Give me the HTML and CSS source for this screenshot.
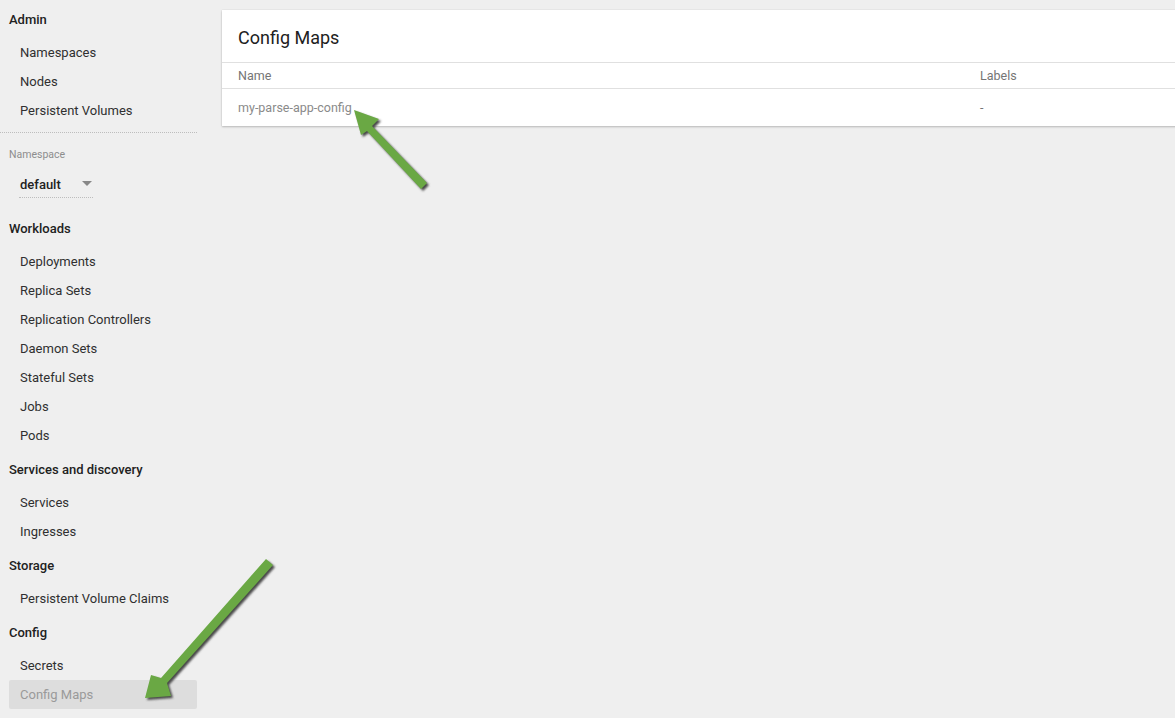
FILE: index.html
```html
<!DOCTYPE html>
<html>
<head>
<meta charset="utf-8">
<link rel="stylesheet" href="styles.css">
</head>
<body>
<div class="page">
  <nav class="sidebar">
    <div class="group-title">Admin</div>
    <div class="item">Namespaces</div>
    <div class="item">Nodes</div>
    <div class="item">Persistent Volumes</div>
    <div class="ns-block">
      <div class="ns-label">Namespace</div>
      <div class="ns-select"><span>default</span><span class="caret"></span></div>
    </div>
    <div class="group-title">Workloads</div>
    <div class="item">Deployments</div>
    <div class="item">Replica Sets</div>
    <div class="item">Replication Controllers</div>
    <div class="item">Daemon Sets</div>
    <div class="item">Stateful Sets</div>
    <div class="item">Jobs</div>
    <div class="item">Pods</div>
    <div class="group-title">Services and discovery</div>
    <div class="item">Services</div>
    <div class="item">Ingresses</div>
    <div class="group-title">Storage</div>
    <div class="item">Persistent Volume Claims</div>
    <div class="group-title">Config</div>
    <div class="item">Secrets</div>
    <div class="item active">Config Maps</div>
  </nav>
  <main class="main">
    <section class="card">
      <h1 class="card-title">Config Maps</h1>
      <div class="row head">
        <div class="col-name">Name</div>
        <div class="col-labels">Labels</div>
      </div>
      <div class="row data">
        <div class="col-name">my-parse-app-config</div>
        <div class="col-labels">-</div>
      </div>
    </section>
  </main>
</div>
<svg class="arrows" width="1175" height="718" viewBox="0 0 1175 718">
  <defs>
    <filter id="sh" x="-20%" y="-20%" width="140%" height="140%">
      <feGaussianBlur stdDeviation="0.8"/>
    </filter>
  </defs>
  <g transform="translate(2,2)" fill="#4a4a4a" filter="url(#sh)">
    <polygon points="421,189 427,183 372,126 379,119 354,110 361,135 367,131"/>
    <polygon points="266,559 273,565 167,683 171,696 145,698 151,675 161,678"/>
  </g>
  <g fill="#6aa844">
    <polygon points="421,189 427,183 372,126 379,119 354,110 361,135 367,131"/>
    <polygon points="266,559 273,565 167,683 171,696 145,698 151,675 161,678"/>
  </g>
</svg>
</body>
</html>
```
FILE: styles.css
```css
html, body {
  margin: 0;
  padding: 0;
  background: #efefef;
  overflow: hidden;
}
body {
  width: 1175px;
  height: 718px;
  position: relative;
  font-family: Roboto, "Liberation Sans", sans-serif;
  color: #212121;
}
.page {
  display: flex;
  align-items: flex-start;
}
.sidebar {
  width: 197px;
  flex: none;
  display: flex;
  flex-direction: column;
}
.group-title {
  font-size: 13px;
  font-weight: 500;
  line-height: 20px;
  padding: 10px 0 8px 9px;
  color: #212121;
}
.item {
  font-size: 13px;
  line-height: 29px;
  height: 29px;
  padding-left: 11px;
  margin-left: 9px;
  color: #303030;
  border-radius: 2px;
}
.item.active {
  background: #dddddd;
  color: #9a9a9a;
}
.ns-block {
  margin-top: 7px;
  border-top: 1px dotted #bdbdbd;
  padding-bottom: 11px;
}
.ns-label {
  font-size: 10.5px;
  color: #8d8d8d;
  line-height: 16px;
  padding: 14px 0 0 9px;
}
.ns-select {
  margin: 12px 0 0 19px;
  width: 74px;
  padding-bottom: 2px;
  border-bottom: 1px dotted #bdbdbd;
  display: flex;
  justify-content: space-between;
  align-items: center;
  font-size: 13px;
  font-weight: 500;
  line-height: 20px;
  color: #222;
  box-sizing: border-box;
  padding-left: 1px;
}
.caret {
  width: 0;
  height: 0;
  border-left: 5px solid transparent;
  border-right: 5px solid transparent;
  border-top: 5px solid #888;
  margin-right: 1px;
  margin-bottom: 3px;
}
.main {
  flex: 1;
  padding: 10px 0 0 25px;
  min-width: 0;
}
.card {
  width: 1000px;
  background: #ffffff;
  box-shadow: 0 1px 2px rgba(0,0,0,0.22), 0 0 1px rgba(0,0,0,0.12);
}
.card-title {
  margin: 0;
  font-size: 18px;
  font-weight: 400;
  color: #212121;
  height: 49px;
  line-height: 49px;
  padding: 3px 0 0 16px;
  border-bottom: 1px solid #e0e0e0;
}
.row {
  display: flex;
  font-size: 12.5px;
}
.row.head {
  height: 25px;
  line-height: 25px;
  color: #757575;
  border-bottom: 1px solid #e0e0e0;
}
.row.data {
  height: 37px;
  line-height: 37px;
  color: #8a8a8a;
}
.col-name {
  width: 742px;
  padding-left: 16px;
}
.col-labels {
  flex: 1;
  color: #757575;
}
.arrows {
  position: absolute;
  left: 0;
  top: 0;
  pointer-events: none;
}
```
